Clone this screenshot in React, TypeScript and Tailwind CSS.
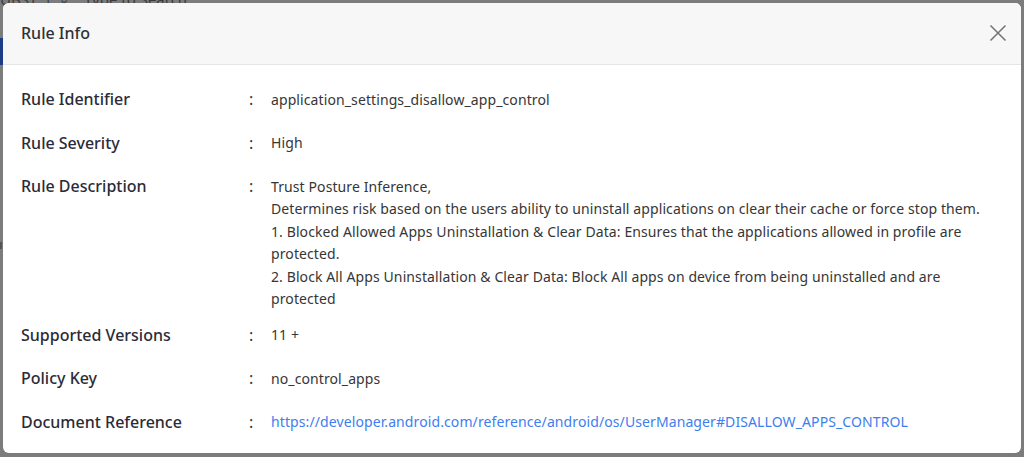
import React from "react";

const rows: { label: string; value: React.ReactNode; tall?: boolean }[] = [
  { label: "Rule Identifier", value: "application_settings_disallow_app_control" },
  { label: "Rule Severity", value: "High" },
  {
    label: "Rule Description",
    tall: true,
    value: (
      <>
        <div>Trust Posture Inference,</div>
        <div>Determines risk based on the users ability to uninstall applications on clear their cache or force stop them.</div>
        <div>1. Blocked Allowed Apps Uninstallation &amp; Clear Data: Ensures that the applications allowed in profile are protected.</div>
        <div>2. Block All Apps Uninstallation &amp; Clear Data: Block All apps on device from being uninstalled and are protected</div>
      </>
    ),
  },
  { label: "Supported Versions", value: "11 +" },
  { label: "Policy Key", value: "no_control_apps" },
  {
    label: "Document Reference",
    value: (
      <a className="text-[#3d7ef0]" href="#">
        https://developer.android.com/reference/android/os/UserManager#DISALLOW_APPS_CONTROL
      </a>
    ),
  },
];

export default function App() {
  return (
    <div
      className="relative w-[1024px] h-[457px] overflow-hidden bg-[#7c7c7c]"
      style={{ fontFamily: '"Noto Sans", "Liberation Sans", sans-serif' }}
    >
      {/* dimmed background page */}
      <div className="absolute left-0 top-[-12px] flex items-center text-[15px] text-[#3a3a3a]">
        <span className="w-[44px]">UBST</span>
        <span className="w-[16px]">|</span>
        <span className="w-[24px]">⌕</span>
        <span>Type to Search</span>
      </div>
      <div className="absolute left-0 top-[38px] w-[4px] h-[27px] bg-[#1c3c86]" />
      <div className="absolute left-0 top-[242px] w-[2px] h-[7px] bg-[#555]" />

      {/* modal */}
      <div className="absolute left-[3px] top-[3px] right-[3px] bottom-[4px] bg-white rounded-[6px] overflow-hidden flex flex-col">
        <div className="h-[62px] shrink-0 bg-[#f7f7f7] border-b border-[#e6e6e6] flex items-center justify-between pl-[18px] pr-[14px] pb-[1px]">
          <div className="text-[16px] font-medium text-[#303038]">Rule Info</div>
          <svg width="18" height="18" viewBox="0 0 18 18">
            <path d="M1.5 1.5 L16.5 16.5 M16.5 1.5 L1.5 16.5" stroke="#737373" strokeWidth="1.5" fill="none" />
          </svg>
        </div>
        <div className="pt-[13px] pl-[18px] pr-[30px]">
          {rows.map((r) => (
            <div key={r.label} className={`flex items-start ${r.tall ? "pt-[10px] pb-[2.5px]" : "py-[10px]"}`}>
              <div className="w-[228px] shrink-0 text-[16px] leading-[23.5px] font-medium text-[#2b2b38]">{r.label}</div>
              <div className="w-[22px] shrink-0 text-[16px] leading-[23.5px] text-[#333]">:</div>
              <div className="flex-1 text-[14px] leading-[22.6px] tracking-[0.1px] pt-[0.5px] text-[#363636]">{r.value}</div>
            </div>
          ))}
        </div>
      </div>
    </div>
  );
}
